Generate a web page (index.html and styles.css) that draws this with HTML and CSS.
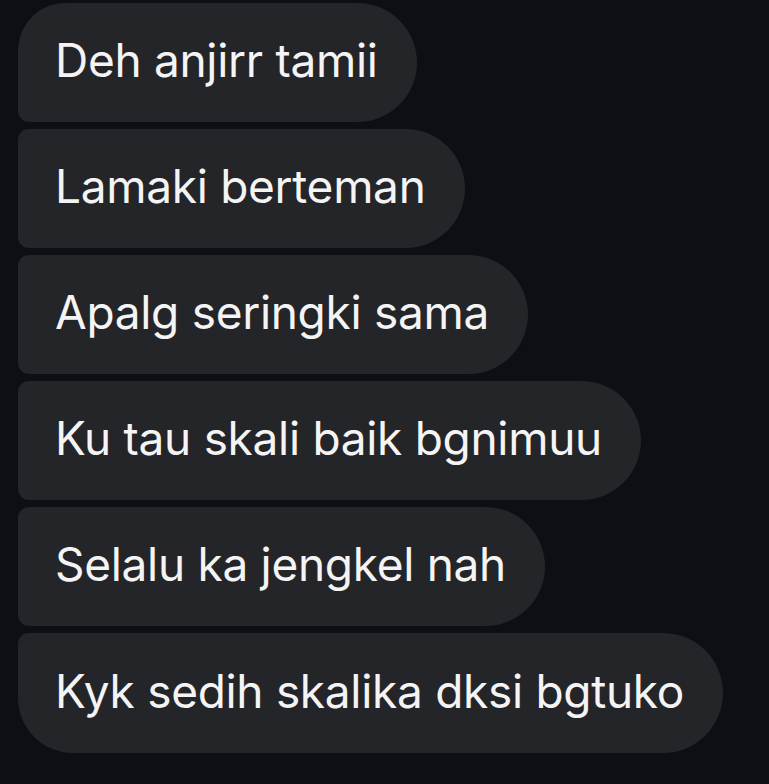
FILE: index.html
```html
<!DOCTYPE html>
<html>
<head>
<meta charset="utf-8">
<link rel="stylesheet" href="styles.css">
</head>
<body>
<div class="thread">
  <div class="bubble first">Deh anjirr tamii</div>
  <div class="bubble">Lamaki berteman</div>
  <div class="bubble">Apalg seringki sama</div>
  <div class="bubble">Ku tau skali baik bgnimuu</div>
  <div class="bubble">Selalu ka jengkel nah</div>
  <div class="bubble last">Kyk sedih skalika dksi bgtuko</div>
</div>
</body>
</html>
```
FILE: styles.css
```css
html, body {
  margin: 0;
  padding: 0;
  background: #0c0f13;
  height: 100%;
}
.thread {
  display: flex;
  flex-direction: column;
  align-items: flex-start;
  gap: 7px;
  padding: 3px 0 0 18px;
}
.bubble {
  box-sizing: border-box;
  height: 119px;
  display: flex;
  align-items: center;
  padding: 0 39px 5px 37px;
  background: #232529;
  color: #f4f4f5;
  font-family: Inter, "Noto Sans", sans-serif;
  font-size: 46px;
  letter-spacing: -0.3px;
  white-space: nowrap;
  border-radius: 11px 60px 60px 11px;
}
.bubble.first {
  border-top-left-radius: 48px;
}
.bubble.last {
  height: 120px;
  border-bottom-left-radius: 55px;
}
```
